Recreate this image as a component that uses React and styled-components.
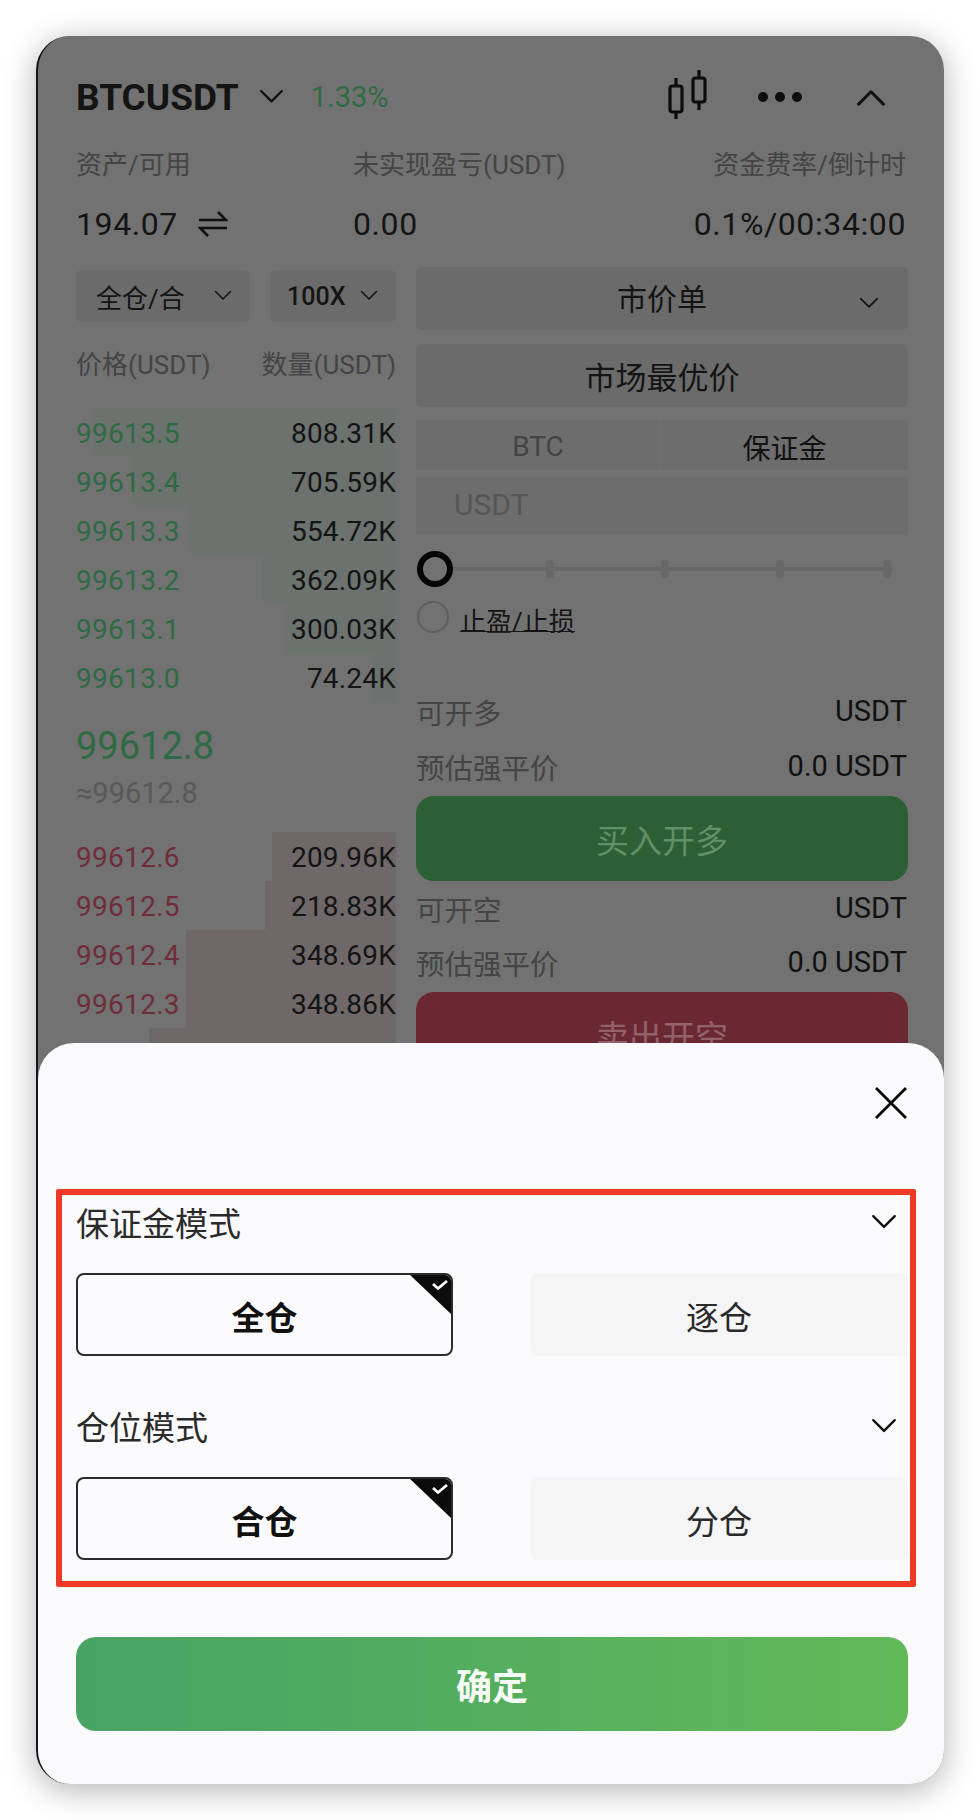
import styled, { createGlobalStyle } from 'styled-components';

const asks = [
  { price: '99613.5', qty: '808.31K', depth: 303 },
  { price: '99613.4', qty: '705.59K', depth: 265 },
  { price: '99613.3', qty: '554.72K', depth: 207 },
  { price: '99613.2', qty: '362.09K', depth: 134 },
  { price: '99613.1', qty: '300.03K', depth: 111 },
  { price: '99613.0', qty: '74.24K', depth: 23 },
];

const bids = [
  { price: '99612.6', qty: '209.96K', depth: 124 },
  { price: '99612.5', qty: '218.83K', depth: 131 },
  { price: '99612.4', qty: '348.69K', depth: 210 },
  { price: '99612.3', qty: '348.86K', depth: 210 },
  { price: '99612.2', qty: '400.00K', depth: 247 },
];

const Chevron = ({ size = 24, up = false, width = 2 }) => (
  <svg width={size} height={size * 0.62} viewBox="0 0 24 15" fill="none">
    <polyline
      points={up ? '2,13 12,3 22,13' : '2,2 12,12 22,2'}
      stroke="#111"
      strokeWidth={width}
      strokeLinecap="round"
      strokeLinejoin="round"
    />
  </svg>
);

const CandleIcon = () => (
  <CandleSvg width="40" height="50" viewBox="0 0 40 50" fill="none" stroke="#0c0c0c" strokeWidth="3.2">
    <rect x="2" y="16" width="12" height="26" rx="2.5" />
    <path d="M8 8v8M8 42v7" />
    <rect x="25" y="8" width="12" height="24" rx="2.5" />
    <path d="M31 0v8M31 32v8" />
  </CandleSvg>
);

const SwapIcon = () => (
  <svg width="30" height="28" viewBox="0 0 30 28" fill="none" stroke="#111" strokeWidth="2.6">
    <path d="M1 10h27l-8-8" />
    <path d="M29 18H2l8 8" />
  </svg>
);

const CornerMark = () => (
  <CornerBadge width="45" height="43" viewBox="0 0 45 43">
    <path d="M0 0h45v43z" fill="#0b0b0b" />
    <path d="M25 11l5 4.5 9-7.5" fill="none" stroke="#fff" strokeWidth="2.8" />
  </CornerBadge>
);

const Choice = ({ label, active }) => (
  <ChoiceButton $active={active}>
    {label}
    {active && <CornerMark />}
  </ChoiceButton>
);

const BookRow = ({ row, side }) => (
  <Row>
    <DepthBar $side={side} style={{ width: row.depth }} />
    <Price $side={side}>{row.price}</Price>
    <Qty>{row.qty}</Qty>
  </Row>
);

const App = () => {
  return (
    <Page>
      <GlobalStyle />
      <Phone>
        <Header>
          <Symbol>BTCUSDT</Symbol>
          <Chevron size={25} width={2.2} />
          <Change>1.33%</Change>
          <HeaderIcons>
            <CandleIcon />
            <Dots>
              <i />
              <i />
              <i />
            </Dots>
            <Chevron size={30} up width={2.4} />
          </HeaderIcons>
        </Header>

        <StatLabels>
          <span>资产/可用</span>
          <span>未实现盈亏(USDT)</span>
          <span>资金费率/倒计时</span>
        </StatLabels>
        <StatValues>
          <BalanceCell>
            194.07
            <SwapIcon />
          </BalanceCell>
          <span>0.00</span>
          <span>0.1%/00:34:00</span>
        </StatValues>

        <Body>
          <BookColumn>
            <SelectRow>
              <SmallSelect $width={174}>
                全仓/合
                <Chevron size={18} />
              </SmallSelect>
              <SmallSelect $width={126}>
                <b>100X</b>
                <Chevron size={18} />
              </SmallSelect>
            </SelectRow>
            <BookHead>
              <span>价格(USDT)</span>
              <span>数量(USDT)</span>
            </BookHead>
            <BookRows>
              {asks.map((row) => (
                <BookRow key={row.price} row={row} side="ask" />
              ))}
            </BookRows>
            <MidPrice>99612.8</MidPrice>
            <MidSub>≈99612.8</MidSub>
            <BookRows>
              {bids.map((row) => (
                <BookRow key={row.price} row={row} side="bid" />
              ))}
            </BookRows>
          </BookColumn>

          <OrderColumn>
            <OrderSelect>
              市价单
              <SelectArrow>
                <Chevron size={20} />
              </SelectArrow>
            </OrderSelect>
            <PriceType>市场最优价</PriceType>
            <Tabs>
              <Tab>BTC</Tab>
              <Tab $active>保证金</Tab>
            </Tabs>
            <AmountInput>USDT</AmountInput>
            <Slider>
              <SliderThumb />
              <Tick $at={134} />
              <Tick $at={249} />
              <Tick $at={364} />
              <Tick $at={471} />
            </Slider>
            <RadioRow>
              <Radio />
              <RadioLabel>止盈/止损</RadioLabel>
            </RadioRow>
            <InfoRow $top={58}>
              <span>可开多</span>
              <b>USDT</b>
            </InfoRow>
            <InfoRow $top={19}>
              <span>预估强平价</span>
              <b>0.0 USDT</b>
            </InfoRow>
            <TradeButton $side="buy">买入开多</TradeButton>
            <InfoRow $top={9}>
              <span>可开空</span>
              <b>USDT</b>
            </InfoRow>
            <InfoRow $top={18}>
              <span>预估强平价</span>
              <b>0.0 USDT</b>
            </InfoRow>
            <TradeButton $side="sell">卖出开空</TradeButton>
          </OrderColumn>
        </Body>

        <Sheet>
          <CloseRow>
            <svg width="34" height="32" viewBox="0 0 34 32" fill="none" stroke="#0a0a0a" strokeWidth="2.8">
              <path d="M2 1l30 30M32 1L2 31" />
            </svg>
          </CloseRow>
          <Highlight>
            <SectionTitle>
              保证金模式
              <TitleArrow>
                <Chevron size={26} width={2.2} />
              </TitleArrow>
            </SectionTitle>
            <Choices>
              <Choice label="全仓" active />
              <Choice label="逐仓" />
            </Choices>
            <SectionTitle $top={51}>
              仓位模式
              <TitleArrow>
                <Chevron size={26} width={2.2} />
              </TitleArrow>
            </SectionTitle>
            <Choices>
              <Choice label="合仓" active />
              <Choice label="分仓" />
            </Choices>
          </Highlight>
          <ConfirmButton>确定</ConfirmButton>
        </Sheet>
      </Phone>
    </Page>
  );
};

const GlobalStyle = createGlobalStyle`
  html, body {
    margin: 0;
    padding: 0;
    background: #fff;
  }
  * {
    box-sizing: border-box;
  }
`;

const Page = styled.div`
  width: 980px;
  height: 1820px;
  padding: 36px;
  background: #fff;
  overflow: hidden;
  font-family: Roboto, 'Noto Sans CJK SC', sans-serif;
  color: #141414;
`;

const Phone = styled.div`
  position: relative;
  width: 908px;
  height: 1748px;
  padding: 31px 36px 0 38px;
  background: #727272;
  border-left: 2px solid #15151b;
  border-radius: 34px;
  overflow: hidden;
  box-shadow: 0 6px 32px rgba(0, 0, 0, 0.3);
`;

const Header = styled.div`
  display: flex;
  align-items: center;
  height: 60px;
`;

const Symbol = styled.div`
  font-size: 37px;
  font-weight: 700;
  margin-right: 20px;
`;

const Change = styled.div`
  margin-left: 27px;
  font-size: 29px;
  color: #2f6a44;
`;

const HeaderIcons = styled.div`
  display: flex;
  align-items: center;
  margin-left: auto;
  margin-right: 22px;
  gap: 50px;
`;

const CandleSvg = styled.svg`
  margin-top: -4px;
`;

const Dots = styled.div`
  display: flex;
  gap: 7px;
  margin-right: 4px;

  i {
    width: 10px;
    height: 10px;
    border-radius: 50%;
    background: #0d0d0d;
  }
`;

const StatLabels = styled.div`
  display: grid;
  grid-template-columns: 277px 1fr auto;
  margin-top: 23px;
  padding-right: 2px;
  height: 30px;
  line-height: 30px;
  font-size: 26px;
  color: #444;
`;

const StatValues = styled.div`
  display: grid;
  grid-template-columns: 277px 1fr auto;
  margin-top: 24px;
  padding-right: 2px;
  height: 40px;
  line-height: 40px;
  font-size: 32px;
  letter-spacing: 0.6px;
`;

const BalanceCell = styled.div`
  display: flex;
  align-items: center;
  gap: 20px;
`;

const Body = styled.div`
  display: grid;
  grid-template-columns: 320px 492px;
  column-gap: 20px;
  margin-top: 23px;
`;

const BookColumn = styled.div`
  display: flex;
  flex-direction: column;
`;

const SelectRow = styled.div`
  display: flex;
  gap: 20px;
  margin-top: 3px;
`;

const SmallSelect = styled.div`
  display: flex;
  align-items: center;
  justify-content: space-between;
  width: ${(p) => p.$width}px;
  height: 52px;
  padding: 0 18px 0 20px;
  background: #6b6b6b;
  border-radius: 6px;
  font-size: 26px;

  b {
    margin-left: -3px;
    font-weight: 500;
    font-size: 25px;
  }
`;

const BookHead = styled.div`
  display: flex;
  justify-content: space-between;
  height: 30px;
  line-height: 30px;
  margin-top: 28px;
  font-size: 26px;
  color: #444;
`;

const BookRows = styled.div`
  margin-top: 28px;

  & ~ & {
    margin-top: 24px;
  }
`;

const Row = styled.div`
  position: relative;
  display: flex;
  align-items: center;
  justify-content: space-between;
  height: 49px;
  padding-top: 1px;
  font-size: 28px;
  letter-spacing: 0.3px;
`;

const DepthBar = styled.div`
  position: absolute;
  top: 0;
  bottom: 0;
  right: 0;
  background: ${(p) => (p.$side === 'ask' ? '#6c726e' : '#6e6868')};
`;

const Price = styled.span`
  position: relative;
  color: ${(p) => (p.$side === 'ask' ? '#2f6a44' : '#6f2c3a')};
`;

const Qty = styled.span`
  position: relative;
  letter-spacing: 0.2px;
`;

const MidPrice = styled.div`
  height: 44px;
  line-height: 44px;
  margin-top: 22px;
  font-size: 38px;
  color: #2f6a44;
`;

const MidSub = styled.div`
  height: 30px;
  line-height: 30px;
  margin-top: 10px;
  font-size: 29px;
  color: #595959;
`;

const OrderColumn = styled.div`
  display: flex;
  flex-direction: column;
`;

const OrderSelect = styled.div`
  position: relative;
  display: flex;
  align-items: center;
  justify-content: center;
  height: 63px;
  padding-bottom: 4px;
  background: #6b6b6b;
  border-radius: 6px;
  font-size: 30px;
`;

const SelectArrow = styled.span`
  position: absolute;
  right: 29px;
  top: 14px;
`;

const PriceType = styled.div`
  display: flex;
  align-items: center;
  justify-content: center;
  height: 63px;
  margin-top: 14px;
  background: #6b6b6b;
  border-radius: 6px;
  font-size: 31px;
`;

const Tabs = styled.div`
  display: grid;
  grid-template-columns: 244px 1fr;
  gap: 1px;
  height: 50px;
  margin-top: 13px;
`;

const Tab = styled.div`
  display: flex;
  align-items: center;
  justify-content: center;
  padding-top: 3px;
  background: #6d6d6d;
  font-size: 28px;
  color: ${(p) => (p.$active ? '#111' : '#444')};
`;

const AmountInput = styled.div`
  display: flex;
  align-items: center;
  height: 58px;
  margin-top: 7px;
  padding-left: 38px;
  padding-bottom: 4px;
  background: #6d6d6d;
  font-size: 30px;
  color: #565656;
`;

const Slider = styled.div`
  position: relative;
  height: 36px;
  margin-top: 16px;

  &::before {
    content: '';
    position: absolute;
    left: 4px;
    top: 16px;
    width: 472px;
    height: 4px;
    background: #686868;
  }
`;

const SliderThumb = styled.div`
  position: absolute;
  left: 1px;
  top: 0;
  width: 36px;
  height: 36px;
  border: 6px solid #050505;
  border-radius: 50%;
  background: #727272;
  z-index: 1;
`;

const Tick = styled.div`
  position: absolute;
  left: ${(p) => p.$at - 4}px;
  top: 9px;
  width: 8px;
  height: 18px;
  border-radius: 3px;
  background: #686868;
`;

const RadioRow = styled.div`
  display: flex;
  align-items: center;
  gap: 11px;
  height: 34px;
  margin-top: 14px;
`;

const Radio = styled.div`
  width: 32px;
  height: 32px;
  margin-left: 1px;
  margin-top: -2px;
  border: 2px solid #5e5e5e;
  border-radius: 50%;
`;

const RadioLabel = styled.div`
  margin-top: 8px;
  height: 30px;
  line-height: 30px;
  font-size: 26px;
  text-decoration: underline;
  text-underline-offset: 0;
  text-decoration-thickness: 1px;
`;

const InfoRow = styled.div`
  display: flex;
  align-items: center;
  justify-content: space-between;
  height: 36px;
  padding-right: 1px;
  margin-top: ${(p) => p.$top}px;
  font-size: 28.5px;
  color: #444;

  b {
    font-weight: 400;
    font-size: 29px;
    color: #111;
  }
`;

const TradeButton = styled.div`
  display: flex;
  align-items: center;
  justify-content: center;
  height: 85px;
  margin-top: 12px;
  border-radius: 18px;
  font-size: 33px;
  background: ${(p) => (p.$side === 'buy' ? '#2c5f34' : '#6a2833')};
  color: ${(p) => (p.$side === 'buy' ? '#5f9067' : '#93616a')};
`;

const Sheet = styled.div`
  position: absolute;
  left: 0;
  right: 0;
  bottom: 0;
  height: 741px;
  padding: 44px 36px 0 38px;
  background: #fafafc;
  border-radius: 36px 36px 0 0;
`;

const CloseRow = styled.div`
  display: flex;
  justify-content: flex-end;
  height: 32px;
`;

const Highlight = styled.div`
  margin: 70px -8px 0 -20px;
  padding: 8px 1px 21px 14px;
  border: 6px solid #ee3a24;
  border-radius: 2px;
`;

const SectionTitle = styled.div`
  position: relative;
  height: 40px;
  line-height: 44px;
  margin-top: ${(p) => p.$top || 0}px;
  font-size: 33px;
  color: #2a2a2a;
`;

const TitleArrow = styled.span`
  position: absolute;
  right: 12px;
  top: -6px;
`;

const Choices = styled.div`
  display: grid;
  grid-template-columns: 377px 378px;
  column-gap: 77px;
  margin-top: 30px;
`;

const ChoiceButton = styled.div`
  position: relative;
  display: flex;
  align-items: center;
  justify-content: center;
  height: 83px;
  padding-top: 3px;
  overflow: hidden;
  border-radius: 8px;
  font-size: 33px;
  font-weight: ${(p) => (p.$active ? 700 : 400)};
  color: ${(p) => (p.$active ? '#111' : '#2a2a2a')};
  background: ${(p) => (p.$active ? '#fbfbfd' : '#f5f5f5')};
  border: ${(p) => (p.$active ? '2px solid #2c2c2c' : 'none')};
`;

const CornerBadge = styled.svg`
  position: absolute;
  top: -2px;
  right: -2px;
`;

const ConfirmButton = styled.div`
  display: flex;
  align-items: center;
  justify-content: center;
  height: 94px;
  margin-top: 50px;
  border-radius: 20px;
  background: linear-gradient(90deg, #47a364, #62b958);
  font-size: 36px;
  font-weight: 700;
  color: #f6fbf5;
`;

export default App;
